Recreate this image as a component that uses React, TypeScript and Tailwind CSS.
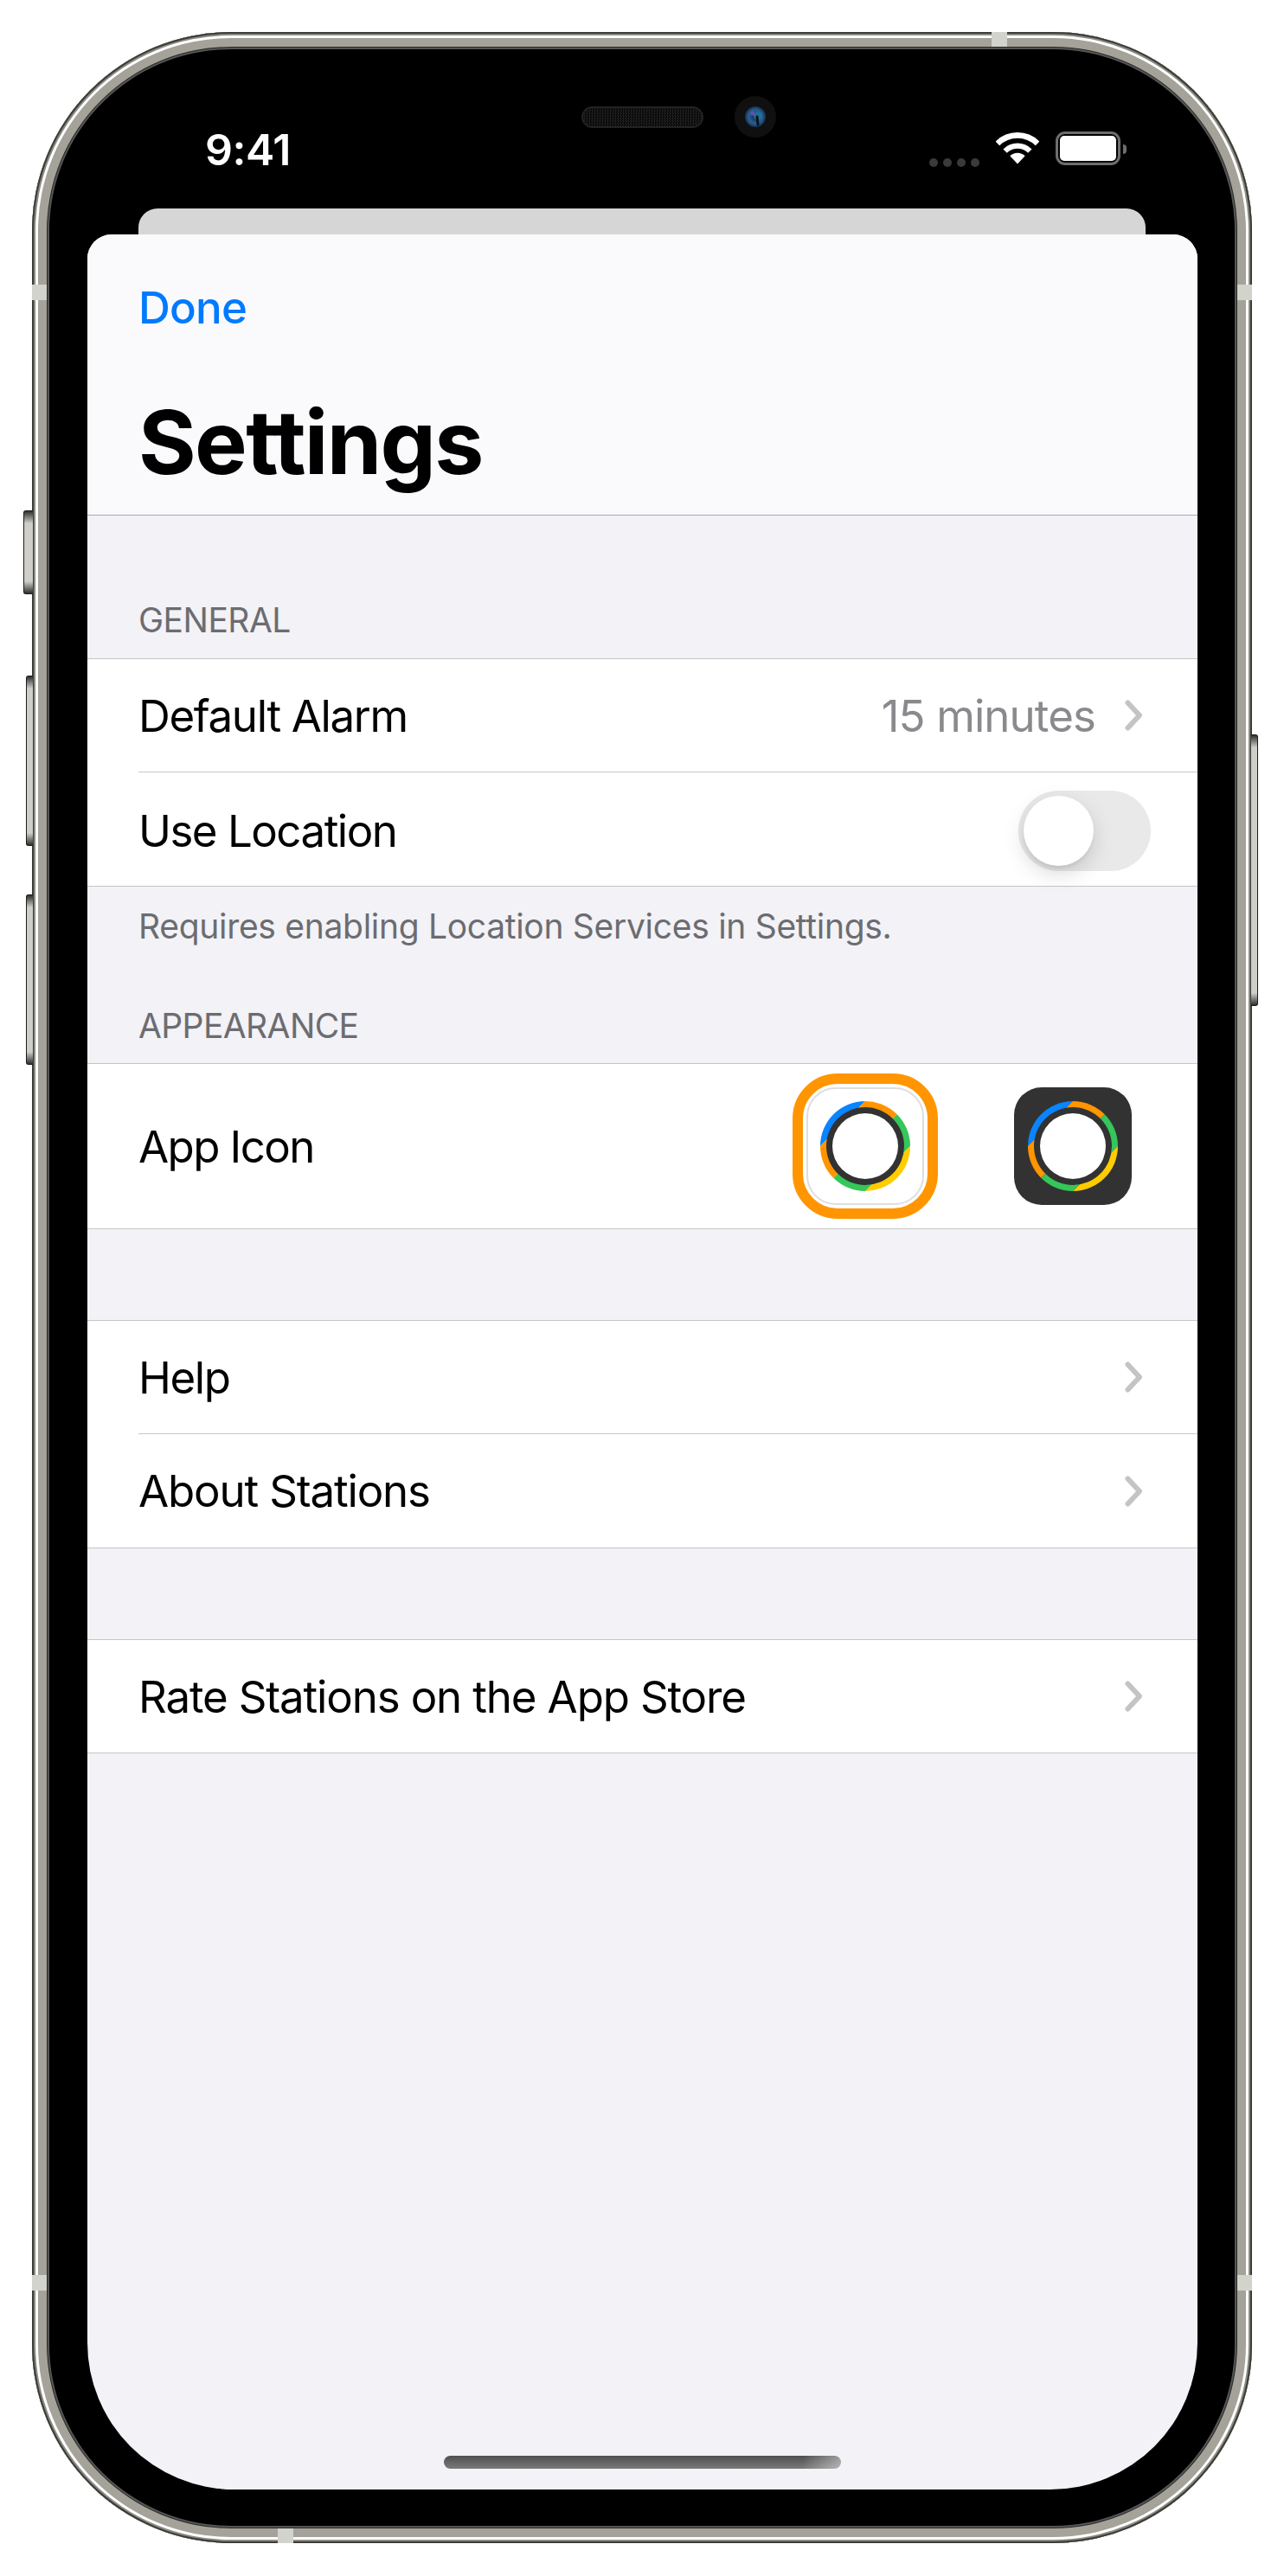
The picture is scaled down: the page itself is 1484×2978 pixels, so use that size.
const font = "font-['Inter','Noto_Sans',sans-serif]";

function Chevron() {
  return (
    <svg width="20" height="36" viewBox="0 0 20 36" fill="none" className="shrink-0">
      <path d="M3.5 3.5 L17 18 L3.5 32.5" stroke="#c4c4c7" strokeWidth="6" strokeLinecap="round" strokeLinejoin="round" />
    </svg>
  );
}

function Ring({ id }: { id: string }) {
  return (
    <svg width="104" height="104" viewBox="-52 -52 104 104">
      <clipPath id={id}>
        <circle cx="0" cy="0" r="52" />
      </clipPath>
      <g clipPath={`url(#${id})`}>
        <polygon points="-60,8 -60,-60 8,-60 -12,-40 -40,-12" fill="#0a84ff" />
        <polygon points="-12,-40 8,-60 60,-60 0,0" fill="#ff9500" />
        <polygon points="0,0 60,-60 60,-8 40,12" fill="#34c759" />
        <polygon points="60,-8 60,60 -8,60 12,40 40,12" fill="#ffcc00" />
        <polygon points="12,40 -8,60 -60,60 0,0" fill="#34c759" />
        <polygon points="0,0 -60,60 -60,8 -40,-12" fill="#ff9500" />
      </g>
      <circle cx="0" cy="0" r="45" fill="#323232" />
      <circle cx="0" cy="0" r="38" fill="#ffffff" />
    </svg>
  );
}

function Wifi() {
  return (
    <svg width="50" height="38" viewBox="0 0 50 38" fill="none">
      <path d="M1.9 12.9 A32.7 32.7 0 0 1 48.1 12.9" stroke="#fff" strokeWidth="6.6" />
      <path d="M10.65 21.65 A20.3 20.3 0 0 1 39.35 21.65" stroke="#fff" strokeWidth="6.2" />
      <path d="M25 36.5 L16.3 27.3 A12.3 12.3 0 0 1 33.7 27.3 Z" fill="#fff" />
    </svg>
  );
}

function Row({ label, value, h = "h-[130px]", tracking }: { label: string; value?: string; h?: string; tracking: string }) {
  return (
    <div className={`flex items-center justify-between bg-white pl-[59px] pr-[64px] ${h}`}>
      <span className={`text-[51px] leading-none text-black ${tracking}`}>{label}</span>
      <div className="flex items-center gap-[34px]">
        {value && <span className="text-[51px] leading-none text-[#8a8a8e] tracking-[-0.9px]">{value}</span>}
        <Chevron />
      </div>
    </div>
  );
}

function Separator() {
  return (
    <div className="bg-white pl-[59px]">
      <div className="h-px bg-[#c6c6c8]" />
    </div>
  );
}

function Group({ children }: { children: React.ReactNode }) {
  return <div className="border-y border-[#c6c6c8]">{children}</div>;
}

function Band({ className }: { className: string }) {
  return <div className={`absolute bg-[#d2d3cb] ${className}`} />;
}

function SideButton({ className }: { className: string }) {
  return (
    <div className={`absolute border-[1.5px] border-[#1c1c1c] bg-[linear-gradient(180deg,#2f2f2f_0,#cfcec8_14px,#cfcec8_calc(100%-14px),#2f2f2f_100%)] ${className}`} />
  );
}

export default function App() {
  return (
    <div className={`h-[2978px] w-[1484px] bg-white pl-[37px] pt-[37px] ${font}`}>
      <div className="relative h-[2903px] w-[1410px]">
        <SideButton className="-left-[10px] top-[553px] h-[97px] w-[11px] rounded-l-[3px] border-r-0" />
        <SideButton className="-left-[7px] top-[744px] h-[197px] w-[8px] rounded-l-[3px] border-r-0" />
        <SideButton className="-left-[7px] top-[997px] h-[197px] w-[8px] rounded-l-[3px] border-r-0" />
        <SideButton className="-right-[7px] top-[812px] h-[314px] w-[8px] rounded-r-[3px] border-l-0" />

        <div className="flex h-full w-full flex-col rounded-[230px] bg-black pb-[62px] pl-[64px] pr-[63px] shadow-[inset_0_0_0_2px_#3c3c37,inset_0_0_0_4px_#8b8b85,inset_0_0_0_7px_#ffffff,inset_0_0_0_17px_#a5a29a,inset_0_0_0_18px_#2a2a2a,inset_0_0_0_20px_#555555]">
          {/* status bar */}
          <div className="flex h-[204px] shrink-0 items-start justify-between pl-[136px] pr-[82px] pt-[114px]">
            <span className="text-[50px] font-semibold leading-[44px] tracking-[-0.5px] text-white">9:41</span>
            <div className="flex items-start pt-[2px]">
              <div className="mr-[19px] mt-[30px] flex gap-[6px]">
                <div className="h-[10px] w-[10px] rounded-full bg-[#3a3a3a]" />
                <div className="h-[10px] w-[10px] rounded-full bg-[#3a3a3a]" />
                <div className="h-[10px] w-[10px] rounded-full bg-[#3a3a3a]" />
                <div className="h-[10px] w-[10px] rounded-full bg-[#3a3a3a]" />
              </div>
              <div className="mr-[19px]">
                <Wifi />
              </div>
              <div className="-mt-[1px] h-[39px] w-[75px] rounded-[11px] border-[3px] border-[#6e6e6e] p-[2px]">
                <div className="h-full w-full rounded-[5px] bg-white" />
              </div>
              <div className="ml-[3px] mt-[14px] h-[11px] w-[4px] rounded-r-full bg-[#6e6e6e]" />
            </div>
          </div>

          {/* stacked sheet behind */}
          <div className="ml-[59px] mr-[60px] h-[30px] shrink-0 rounded-t-[22px] bg-[#d6d6d6]" />

          {/* main sheet */}
          <div className="relative min-h-0 flex-1 overflow-hidden rounded-b-[170px] rounded-t-[28px] bg-[#f2f2f7]">
            <div className="flex h-[325px] flex-col border-b border-[#a9a9ad] bg-[#fafafd] pl-[59px]">
              <span className="mt-[60px] text-[51px] font-medium leading-[50px] tracking-[-0.8px] text-[#007aff]">Done</span>
              <span className="mt-[75px] text-[102px] font-bold leading-[110px] tracking-[-1.7px] text-black">Settings</span>
            </div>

            <div className="flex h-[165px] items-end pb-[25px] pl-[59px] text-[39px] leading-none tracking-[-0.5px] text-[#6c6c70]">GENERAL</div>
            <Group>
              <Row label="Default Alarm" value="15 minutes" tracking="tracking-[-1.35px]" />
              <Separator />
              <div className="flex h-[131px] items-center justify-between bg-white pl-[59px] pr-[54px] pt-[4px]">
                <span className="text-[51px] leading-none tracking-[-1.5px] text-black">Use Location</span>
                <div className="flex h-[93px] w-[153px] items-center rounded-full bg-[#e9e9ea] pl-[6px]">
                  <div className="h-[81px] w-[81px] rounded-full bg-white shadow-[0_9px_24px_rgba(0,0,0,0.15),0_3px_3px_rgba(0,0,0,0.06)]" />
                </div>
              </div>
            </Group>
            <div className="flex h-[204px] flex-col pl-[59px] text-[39px] leading-none text-[#6c6c70]">
              <span className="mt-[26px] tracking-[-0.3px]">Requires enabling Location Services in Settings.</span>
              <span className="mt-[76px] tracking-[-0.6px]">APPEARANCE</span>
            </div>
            <Group>
              <div className="flex h-[190px] items-center justify-between bg-white pl-[59px] pr-[76px]">
                <span className="text-[51px] leading-none tracking-[-1.6px] text-black">App Icon</span>
                <div className="flex items-center gap-[88px]">
                  <div className="flex h-[168px] w-[168px] items-center justify-center rounded-[52px] border-[12px] border-[#ff9500]">
                    <div className="flex h-[136px] w-[136px] items-center justify-center rounded-[34px] border-2 border-[#dedede] bg-white">
                      <Ring id="ring-light" />
                    </div>
                  </div>
                  <div className="flex h-[136px] w-[136px] items-center justify-center rounded-[32px] bg-[#323232]">
                    <Ring id="ring-dark" />
                  </div>
                </div>
              </div>
            </Group>
            <div className="h-[105px]" />
            <Group>
              <Row label="Help" tracking="tracking-[-1.4px]" />
              <Separator />
              <Row label="About Stations" h="h-[131px]" tracking="tracking-[-1.17px]" />
            </Group>
            <div className="h-[105px]" />
            <Group>
              <Row label="Rate Stations on the App Store" tracking="tracking-[-1.15px]" />
            </Group>

            <div className="absolute bottom-[24px] left-[412px] h-[15px] w-[459px] rounded-full bg-[linear-gradient(100deg,transparent_90%,rgba(255,255,255,0.45)_100%),linear-gradient(180deg,#4f4f4f,#7a7a7a)]" />
          </div>
        </div>

        {/* earpiece and camera sit over the black glass */}
        <div className="absolute left-[635px] top-[86px] h-[25px] w-[141px] rounded-full border-2 border-[#222222] bg-[repeating-conic-gradient(#1f1f1f_0_25%,#050505_0_50%)] bg-[length:3px_3px]" />
        <svg className="absolute left-[812px] top-[74px]" width="48" height="48" viewBox="0 0 48 48">
          <defs>
            <radialGradient id="lens" cx="50%" cy="50%" r="55%">
              <stop offset="0%" stopColor="#16283f" />
              <stop offset="60%" stopColor="#2a5f94" />
              <stop offset="100%" stopColor="#0f2238" />
            </radialGradient>
          </defs>
          <circle cx="24" cy="24" r="24" fill="#101010" />
          <circle cx="24" cy="24" r="12" fill="url(#lens)" />
          <circle cx="21" cy="20" r="2.5" fill="#6a4fb0" />
          <circle cx="27" cy="23" r="5" fill="#1f6f9c" />
          <path d="M26 24 L27 33" stroke="#081420" strokeWidth="3" strokeLinecap="round" />
        </svg>

        {/* antenna bands */}
        <Band className="left-[1109px] top-0 h-[17px] w-[18px]" />
        <Band className="left-0 top-[292px] h-[18px] w-[17px]" />
        <Band className="right-0 top-[292px] h-[18px] w-[17px]" />
        <Band className="left-0 top-[2593px] h-[18px] w-[17px]" />
        <Band className="right-0 top-[2593px] h-[18px] w-[17px]" />
        <Band className="left-[284px] bottom-0 h-[17px] w-[18px]" />
      </div>
    </div>
  );
}
